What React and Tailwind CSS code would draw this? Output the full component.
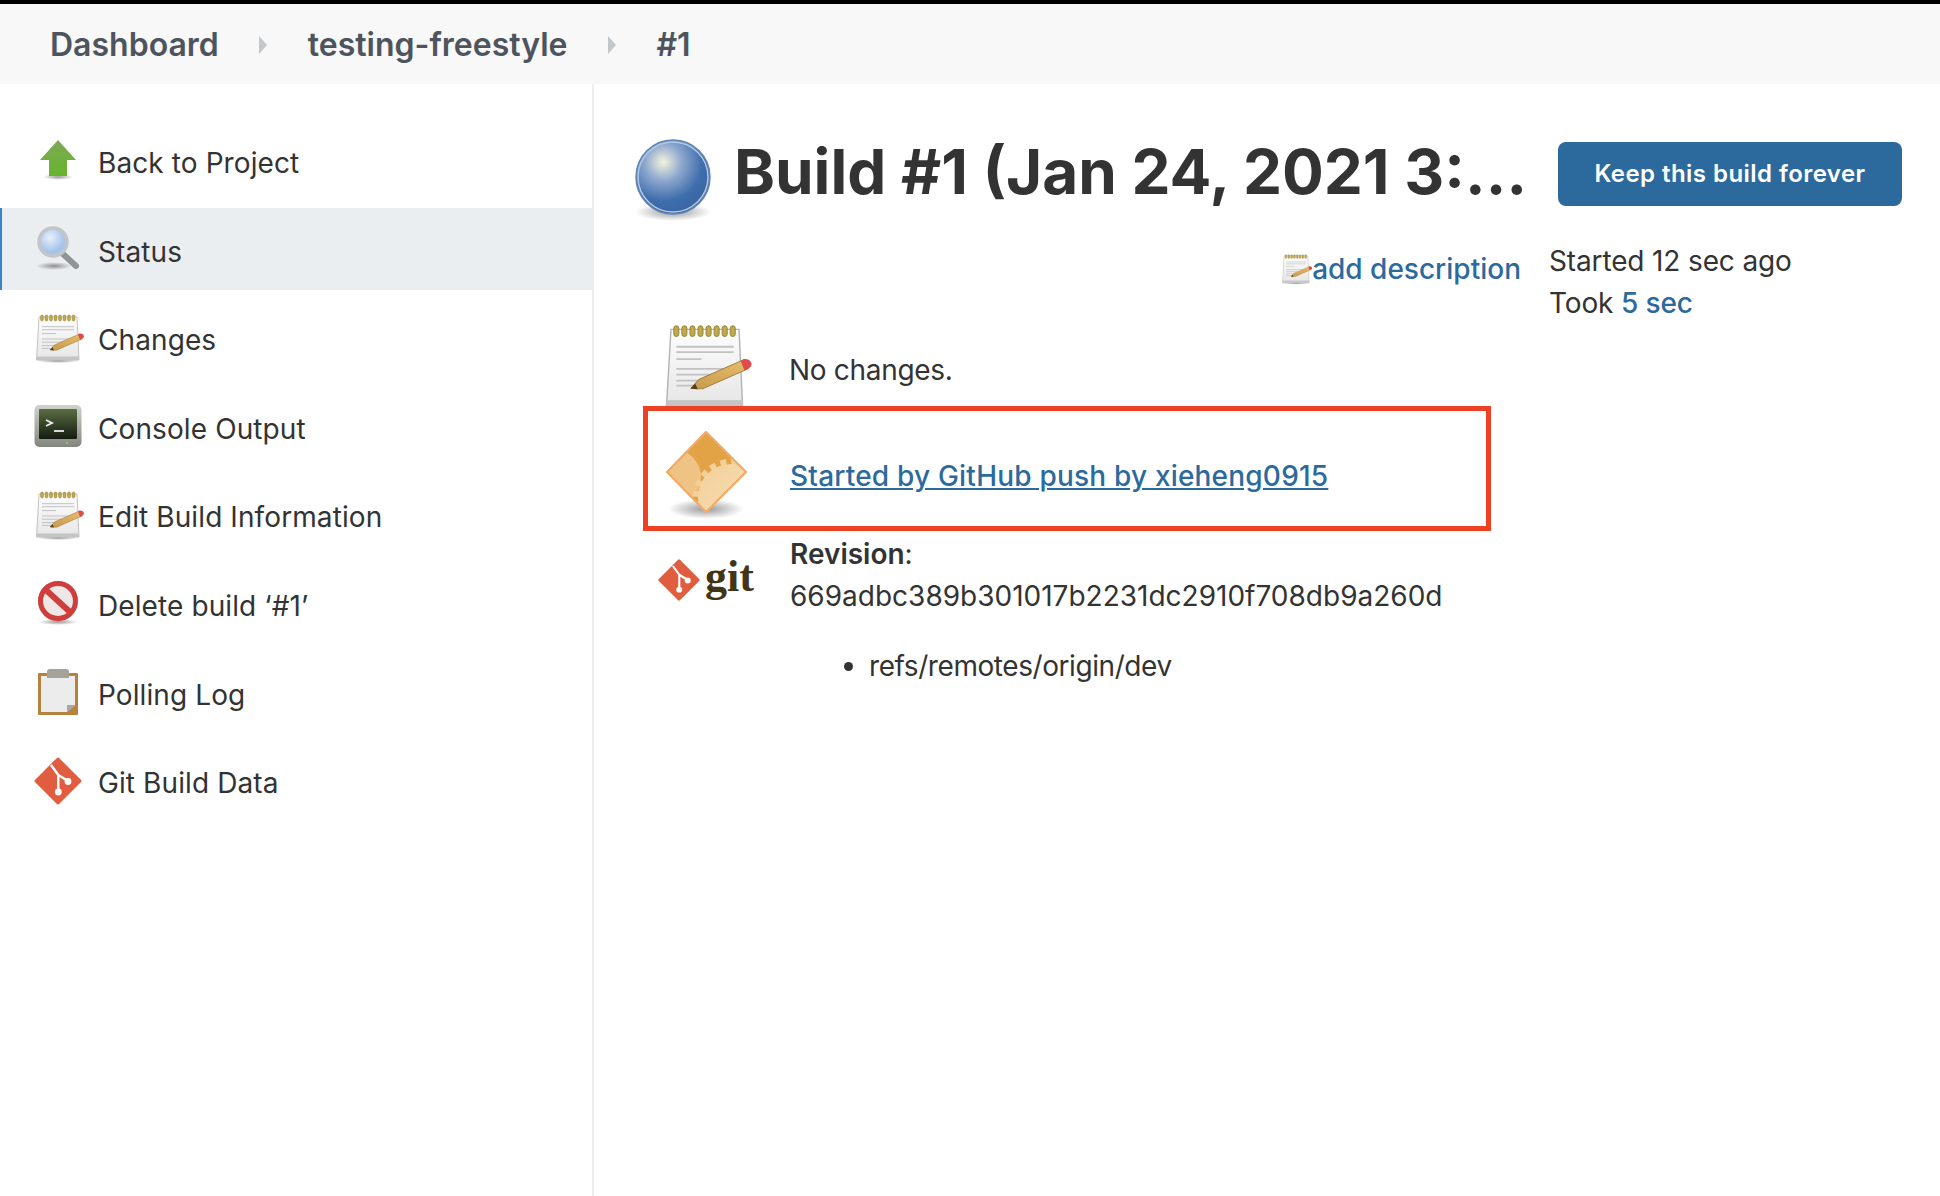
import React from 'react';

function Shadow({ cx = 24, cy = 45, rx = 20, ry = 3, id = 'sh' }) {
  return (
    <>
      <defs>
        <radialGradient id={id}>
          <stop offset="0%" stopColor="#000" stopOpacity="0.4" />
          <stop offset="100%" stopColor="#000" stopOpacity="0" />
        </radialGradient>
      </defs>
      <ellipse cx={cx} cy={cy} rx={rx} ry={ry} fill={`url(#${id})`} />
    </>
  );
}

function ArrowIcon() {
  return (
    <svg viewBox="0 0 48 48" className="w-12 h-12 shrink-0">
      <Shadow cx={24} cy={40} rx={15} ry={3} id="sh-arrow" />
      <defs>
        <linearGradient id="arrow" x1="0" y1="0" x2="0" y2="1">
          <stop offset="0%" stopColor="#7fa857" />
          <stop offset="100%" stopColor="#65b52c" />
        </linearGradient>
      </defs>
      <path d="M24 3 L42 23 L33 23 L33 39 L15 39 L15 23 L6 23 Z" fill="url(#arrow)" />
    </svg>
  );
}

function SearchIcon() {
  return (
    <svg viewBox="0 0 48 48" className="w-12 h-12 shrink-0">
      <Shadow cx={20} cy={41} rx={18} ry={4} id="sh-search" />
      <defs>
        <radialGradient id="glass" cx="40%" cy="35%">
          <stop offset="0%" stopColor="#e8f0fa" />
          <stop offset="100%" stopColor="#a6c3ea" />
        </radialGradient>
      </defs>
      <path d="M29 29 L42 41" stroke="#8f9498" strokeWidth="6" strokeLinecap="round" />
      <circle cx="19" cy="17" r="14" fill="url(#glass)" stroke="#c3c6c8" strokeWidth="3.5" />
    </svg>
  );
}

function Notepad({ className }) {
  return (
    <svg viewBox="0 0 48 48" className={`${className} shrink-0 overflow-visible`}>
      <Shadow cx={24} cy={47} rx={21} ry={2} id="sh-note" />
      <defs>
        <linearGradient id="paper" x1="0" y1="0" x2="0" y2="1">
          <stop offset="0%" stopColor="#fdfdfd" />
          <stop offset="100%" stopColor="#e6e6e6" />
        </linearGradient>
        <linearGradient id="pencil" x1="0" y1="1" x2="1" y2="0">
          <stop offset="0%" stopColor="#c79a4c" />
          <stop offset="100%" stopColor="#e8bd6d" />
        </linearGradient>
      </defs>
      <path d="M5 3 H43 L45 46 H2.5 Z" fill="url(#paper)" stroke="#b4b4b4" strokeWidth="0.8" />
      <rect x="2.5" y="42.5" width="42.5" height="3.5" fill="#c4c4c4" />
      {[8, 12.5, 17, 21.5, 26, 30.5, 35, 39.5].map((x) => (
        <rect key={x} x={x - 1.4} y="1" width="2.8" height="6" rx="1.4" fill="#c0a94e" stroke="#8f7f30" strokeWidth="0.5" />
      ))}
      <g stroke="#c2c2c2" strokeWidth="1">
        <path d="M8 12.7 H40" />
        <path d="M8 15.7 H40" />
        <path d="M8 19.6 H22" />
        <path d="M8 25 H40" />
        <path d="M8 28.2 H34" />
        <path d="M8 31.6 H28" />
        <path d="M8 34.4 H22" />
      </g>
      <path d="M16 36 L20.4 31 L45.9 19.8 L48.1 25 L22.6 36.2 Z" fill="url(#pencil)" stroke="#9c7430" strokeWidth="0.5" />
      <path d="M16 36 L18.5 33.2 L20 36.4 Z" fill="#4d3d22" />
      <path d="M44 20.6 L46 19.6 Q49 19.5 50 22 Q50 24 48 25 L46 26 Z" fill="#df4a4a" />
    </svg>
  );
}

function TerminalIcon() {
  return (
    <svg viewBox="0 0 48 48" className="w-12 h-12 shrink-0">
      <defs>
        <linearGradient id="screen" x1="0" y1="0" x2="0" y2="1">
          <stop offset="0%" stopColor="#5a6d41" />
          <stop offset="100%" stopColor="#151b10" />
        </linearGradient>
        <linearGradient id="case" x1="0" y1="0" x2="0" y2="1">
          <stop offset="0%" stopColor="#d0d2cc" />
          <stop offset="100%" stopColor="#83867f" />
        </linearGradient>
      </defs>
      <rect x="0.5" y="3" width="47" height="42" rx="5" fill="url(#case)" />
      <rect x="5" y="7" width="38" height="30" rx="1" fill="url(#screen)" />
      <path d="M12 18 L18 21 L12 24" fill="none" stroke="#f0f0f0" strokeWidth="1.8" />
      <path d="M20 29 H30" stroke="#d8d8d8" strokeWidth="2" />
      <circle cx="33" cy="41" r="1" fill="#9ad34f" />
    </svg>
  );
}

function DeleteIcon() {
  return (
    <svg viewBox="0 0 48 48" className="w-12 h-12 shrink-0">
      <Shadow cx={24} cy={43} rx={20} ry={3} id="sh-del" />
      <circle cx="24" cy="22" r="20" fill="#efe6e6" />
      <circle cx="24" cy="22" r="17.5" fill="none" stroke="#cf3d3d" strokeWidth="5" />
      <path d="M12 11 L36 33" stroke="#cf3d3d" strokeWidth="6" />
    </svg>
  );
}

function ClipboardIcon() {
  return (
    <svg viewBox="0 0 48 48" className="w-12 h-12 shrink-0">
      <rect x="4" y="5" width="40" height="42" rx="1" fill="#b5833d" />
      <path d="M7 8 H41 V37 L33 44 H7 Z" fill="#ececec" />
      <path d="M41 37 L33 44 V37 Z" fill="#a8a8a8" />
      <path d="M13 10 V4 Q13 1 16 1 H32 Q35 1 35 4 V10 Z" fill="#a3a398" />
    </svg>
  );
}

function GitDiamond({ className }) {
  return (
    <svg viewBox="0 0 48 48" className={`${className} shrink-0`}>
      <path d="M24 2 L46 24 L24 46 L2 24 Z" fill="#e05d3f" stroke="#e05d3f" strokeWidth="3" strokeLinejoin="round" />
      <path d="M17 8 L24.3 18 V34 M24.3 18 L34 24" fill="none" stroke="#fff" strokeWidth="2.4" />
      <circle cx="24.3" cy="35" r="3.4" fill="#fff" />
      <circle cx="34" cy="24.5" r="3.4" fill="#fff" />
    </svg>
  );
}

function BallIcon() {
  return (
    <svg viewBox="0 0 80 84" className="w-20 h-[84px] shrink-0">
      <Shadow cx={40} cy={74} rx={38} ry={9} id="sh-ball" />
      <defs>
        <radialGradient id="ball" cx="37%" cy="30%" r="70%">
          <stop offset="0%" stopColor="#f4f4dc" />
          <stop offset="35%" stopColor="#8fa9cf" />
          <stop offset="75%" stopColor="#3f6ead" />
          <stop offset="100%" stopColor="#3a66a2" />
        </radialGradient>
      </defs>
      <circle cx="40" cy="39" r="37" fill="url(#ball)" stroke="#5f86b7" strokeWidth="1.5" />
      <circle cx="40" cy="39" r="35" fill="none" stroke="#b3c8e0" strokeWidth="1.5" />
    </svg>
  );
}

function GearDiamond() {
  return (
    <svg viewBox="0 0 84 100" className="w-[84px] h-[100px] shrink-0">
      <Shadow cx={41} cy={78} rx={38} ry={10} id="sh-gear" />
      <defs>
        <clipPath id="dia">
          <path d="M41 0 L82 41 L41 82 L1 41 Z" />
        </clipPath>
        <linearGradient id="gearfill" x1="0" y1="0" x2="1" y2="1">
          <stop offset="0%" stopColor="#f3d09a" />
          <stop offset="100%" stopColor="#f9e0ba" />
        </linearGradient>
      </defs>
      <path d="M41 0 L82 41 L41 82 L1 41 Z" fill="#e2a347" />
      <g clipPath="url(#dia)">
        <circle cx="8" cy="46" r="28" fill="#efc383" />
        <circle cx="66" cy="66" r="35" fill="none" stroke="#f3d09a" strokeWidth="6" strokeDasharray="6 5" />
        <circle cx="66" cy="66" r="33" fill="url(#gearfill)" />
      </g>
      <path d="M41 1 L81 41 L41 81 L2 41 Z" fill="none" stroke="#f2aa66" strokeWidth="2" strokeLinejoin="round" />
    </svg>
  );
}

const items = [
  { label: 'Back to Project', icon: <ArrowIcon /> },
  { label: 'Status', icon: <SearchIcon />, active: true },
  { label: 'Changes', icon: <Notepad className="w-12 h-12" /> },
  { label: 'Console Output', icon: <TerminalIcon /> },
  { label: 'Edit Build Information', icon: <Notepad className="w-12 h-12" /> },
  { label: 'Delete build ‘#1’', icon: <DeleteIcon /> },
  { label: 'Polling Log', icon: <ClipboardIcon /> },
  { label: 'Git Build Data', icon: <GitDiamond className="w-12 h-12" /> },
];

function Chevron() {
  return (
    <svg viewBox="0 0 10 20" className="w-2.5 h-5 mx-[39.5px] shrink-0">
      <path d="M1 1 L9 10 L1 19 Z" fill="#c4c7ca" />
    </svg>
  );
}

export default function App() {
  return (
    <div className="min-h-screen h-screen flex flex-col bg-white border-t-4 border-black font-['Inter',sans-serif] text-[#333] text-[28px] leading-[42px] overflow-hidden">
      {/* Breadcrumbs */}
      <div className="h-20 shrink-0 flex items-center pl-[50px] pt-[2px] bg-[#f8f8f8] text-[#4d545d] text-[32px] font-semibold">
        <span>Dashboard</span>
        <Chevron />
        <span>testing-freestyle</span>
        <Chevron />
        <span>#1</span>
      </div>

      <div className="flex-1 flex min-h-0">
        {/* Side panel */}
        <aside className="w-[594px] shrink-0 border-r-2 border-[#eeeeee] pt-[35.5px] flex flex-col gap-[6.6px] tracking-[0.1px]">
          {items.map((item) => (
            <div
              key={item.label}
              className={`h-[82px] flex items-center gap-4 ${
                item.active ? 'bg-[#ebeef1] border-l-2 border-[#3d85c6] pl-[32px]' : 'pl-[34px]'
              }`}
            >
              {item.icon}
              <span className="mt-[5px]">{item.label}</span>
            </div>
          ))}
        </aside>

        {/* Main panel */}
        <main className="flex-1 pl-[39px] pr-[38px] pt-[50px]">
          <div className="flex items-start">
            <div className="mt-1">
              <BallIcon />
            </div>
            <h1 className="ml-[21px] -mt-1 flex-1 text-[62px] leading-[84px] font-bold whitespace-nowrap">
              Build #1 (Jan 24, 2021 3:…
            </h1>
            <button className="mt-2 w-[344px] h-16 rounded-lg bg-[#2c6a9e] text-white text-2xl font-semibold tracking-[0.45px]">
              Keep this build forever
            </button>
          </div>

          <div className="flex mt-[18px]">
            <div className="w-[888px] shrink-0">
              <div className="h-[84px] flex justify-end items-start pt-[8px]">
                <a className="flex items-center text-[#2c6a9e] font-medium">
                  <Notepad className="w-[30px] h-[32px]" />
                  <span className="ml-[1px]">add description</span>
                </a>
              </div>

              <div className="h-[82px] flex items-start pl-[29px] tracking-[-0.3px]">
                <Notepad className="w-[86px] h-[86px]" />
                <div className="ml-[41px] mt-[25px]">No changes.</div>
              </div>

              <div className="relative ml-[10px] w-[848px] h-[125px] border-[5px] border-[#ee4023] flex items-start pl-[17px]">
                <div className="mt-5">
                  <GearDiamond />
                </div>
                <a className="ml-[41px] mt-[44px] text-[#2c6a9e] font-medium underline tracking-[0.2px]">
                  Started by GitHub push by xieheng0915
                </a>
              </div>

              <div className="flex items-start pl-[25px]">
                <div className="flex items-center mt-[28px] w-[132px]">
                  <GitDiamond className="w-[42px] h-[42px]" />
                  <span className="ml-[5px] -mt-[6px] font-['Liberation_Serif',serif] font-bold text-[44px] leading-[44px] text-[#413516]">git</span>
                </div>
                <div className="pt-[2px]">
                  <div><b className="font-semibold">Revision</b>:</div>
                  <div>669adbc389b301017b2231dc2910f708db9a260d</div>
                  <ul className="list-disc pl-[79px] mt-[28px] tracking-[-0.43px]">
                    <li>refs/remotes/origin/dev</li>
                  </ul>
                </div>
              </div>
            </div>

            <div className="ml-[28px] tracking-[-0.14px]">
              <div>Started 12 sec ago</div>
              <div>
                Took <a className="text-[#2c6a9e] font-medium">5 sec</a>
              </div>
            </div>
          </div>
        </main>
      </div>
    </div>
  );
}
